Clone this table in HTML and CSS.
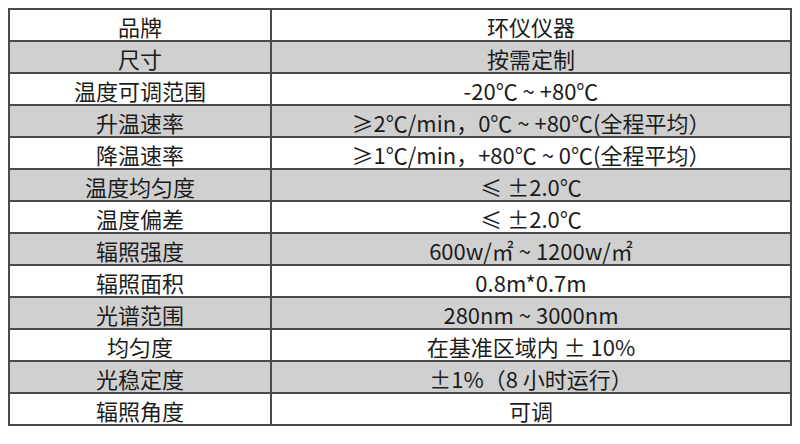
FILE: index.html
```html
<!DOCTYPE html>
<html lang="zh">
<head>
<meta charset="utf-8">
<link rel="stylesheet" href="styles.css">
</head>
<body>
<table class="spec">
  <tr><td>品牌</td><td>环仪仪器</td></tr>
  <tr class="alt"><td>尺寸</td><td>按需定制</td></tr>
  <tr><td>温度可调范围</td><td>-20℃ ~ +80℃</td></tr>
  <tr class="alt"><td>升温速率</td><td>≥2℃/min，0℃ ~ +80℃(全程平均）</td></tr>
  <tr><td>降温速率</td><td>≥1℃/min，+80℃ ~ 0℃(全程平均）</td></tr>
  <tr class="alt"><td>温度均匀度</td><td>≤ ±2.0℃</td></tr>
  <tr><td>温度偏差</td><td>≤ ±2.0℃</td></tr>
  <tr class="alt"><td>辐照强度</td><td>600w/㎡ ~ 1200w/㎡</td></tr>
  <tr><td>辐照面积</td><td>0.8m*0.7m</td></tr>
  <tr class="alt"><td>光谱范围</td><td>280nm ~ 3000nm</td></tr>
  <tr><td>均匀度</td><td>在基准区域内 ± 10%</td></tr>
  <tr class="alt"><td>光稳定度</td><td>±1%（8 小时运行）</td></tr>
  <tr><td>辐照角度</td><td>可调</td></tr>
</table>
</body>
</html>
```
FILE: styles.css
```css
html, body {
  margin: 0;
  padding: 0;
  background: #ffffff;
}
body {
  padding: 8px;
  font-family: "Noto Sans CJK SC", "Noto Sans", sans-serif;
  color: #1c1c1c;
}
.spec {
  width: 784px;
  border-collapse: collapse;
  table-layout: fixed;
  font-size: 22px;
}
.spec td {
  border: 2px solid #4a4a4a;
  height: 30.85px;
  padding: 2px 0 0 0;
  box-sizing: border-box;
  text-align: center;
  vertical-align: middle;
  line-height: 28px;
  white-space: nowrap;
}
.spec td:first-child {
  width: 262px;
}
.spec tr.alt td {
  background: #d0d0d0;
}
```
